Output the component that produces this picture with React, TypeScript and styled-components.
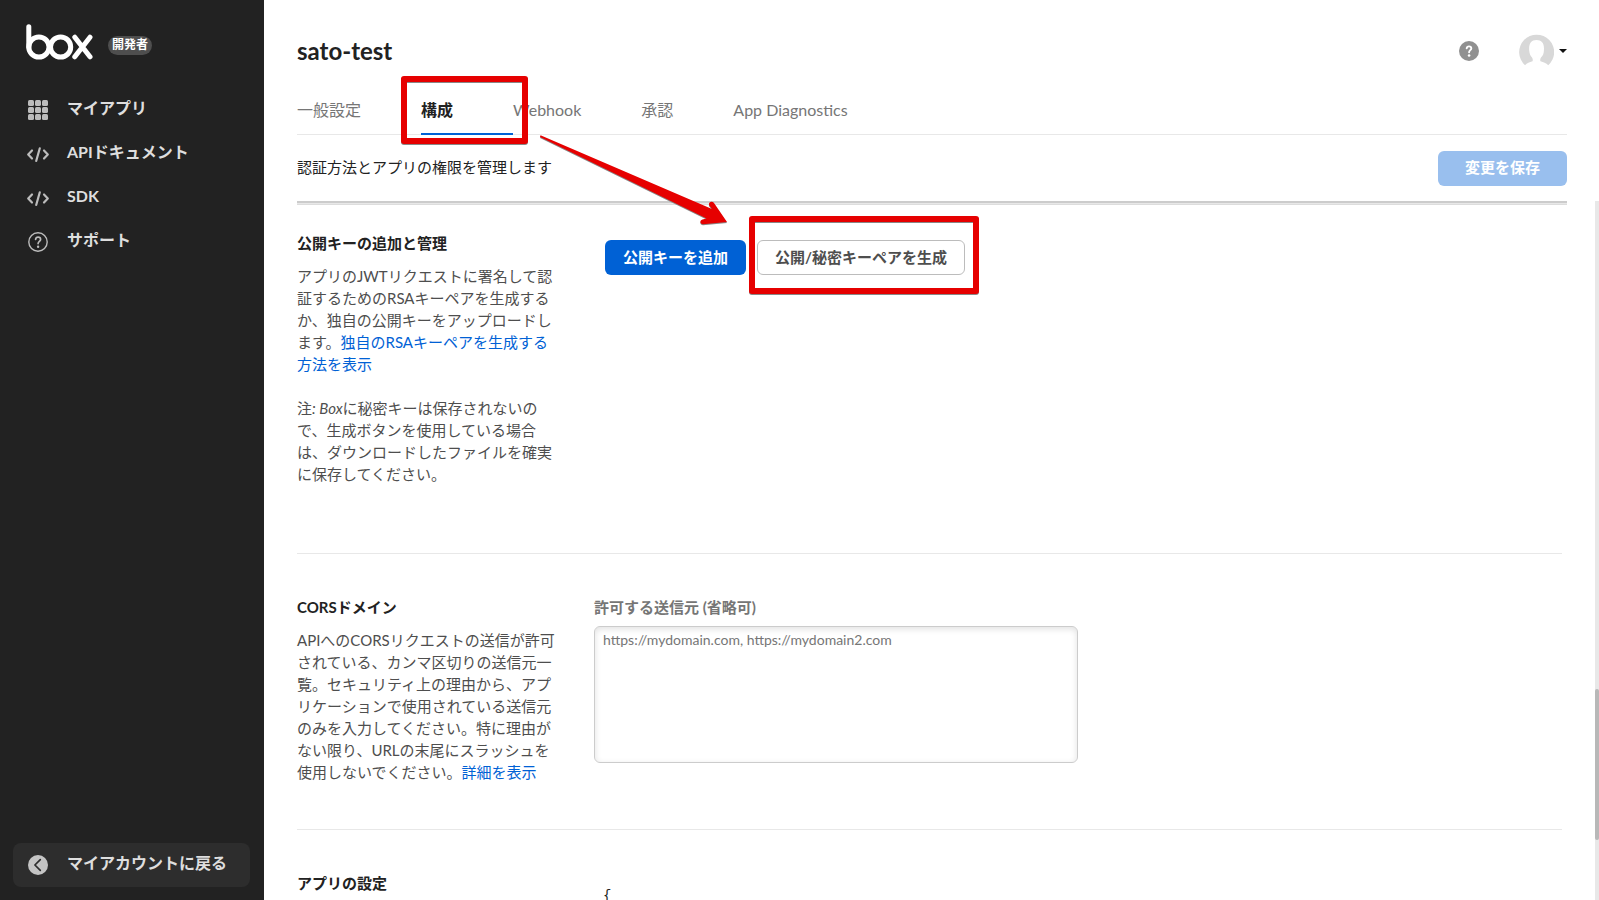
import React from 'react';
import styled, { createGlobalStyle } from 'styled-components';

const GlobalStyle = createGlobalStyle`
  * { box-sizing: border-box; }
  body {
    margin: 0;
    background: #fff;
    color: #222;
    font-family: Lato, "Noto Sans CJK JP", sans-serif;
    font-size: 15px;
    line-height: 22px;
  }
  button, textarea { font-family: inherit; }
`;

const Page = styled.div`
  position: relative;
  display: flex;
  height: 100vh;
  overflow: hidden;
`;

const Sidebar = styled.aside`
  flex: none;
  width: 264px;
  display: flex;
  flex-direction: column;
  padding: 23px 14px 13px 13px;
  background: #222;
`;

const Brand = styled.a`
  display: flex;
  align-items: center;
  gap: 15px;
  height: 38px;
  padding-left: 13px;
  text-decoration: none;
`;

const Badge = styled.span`
  height: 19px;
  margin-top: 7px;
  padding: 0 4px;
  border-radius: 10px;
  background: #4e4e4e;
  color: #fff;
  font-size: 12px;
  font-weight: 700;
  line-height: 17px;
`;

const Menu = styled.nav`
  flex: 1;
  display: flex;
  flex-direction: column;
  margin-top: 26px;
`;

const MenuLink = styled.a<{ $boxed?: boolean }>`
  display: flex;
  align-items: center;
  gap: 17px;
  height: 44px;
  padding: 0 0 ${(p) => (p.$boxed ? 2 : 0)}px 13px;
  border-radius: 8px;
  background: ${(p) => (p.$boxed ? '#2d2d2d' : 'transparent')};
  color: #dedede;
  font-size: 16px;
  font-weight: 700;
  text-decoration: none;

  svg { flex: none; margin-top: 2px; }
  span { padding-bottom: 2px; }
`;

const Main = styled.main`
  flex: 1;
  min-width: 0;
  display: flex;
  flex-direction: column;
`;

const Top = styled.header`
  flex: none;
  margin: 0 32px 0 33px;
`;

const TitleRow = styled.div`
  display: flex;
  align-items: center;
  height: 88px;
  padding-top: 14px;
`;

const Title = styled.h1`
  flex: 1;
  margin: 0;
  font-size: 24px;
  font-weight: 700;
  line-height: 28px;
`;

const IconButton = styled.button`
  display: flex;
  align-items: center;
  gap: 5px;
  margin-left: 40px;
  padding: 0;
  border: 0;
  background: none;
`;

const Tabs = styled.nav`
  display: flex;
  height: 47px;
  border-bottom: 1px solid #e8e8e8;
`;

const Tab = styled.a<{ $active?: boolean }>`
  height: 47px;
  padding: 11px 60px 0 0;
  border-bottom: ${(p) => (p.$active ? '2px solid #0061d5' : '0')};
  color: ${(p) => (p.$active ? '#222' : '#767676')};
  font-size: 16px;
  font-weight: ${(p) => (p.$active ? 700 : 400)};
  text-decoration: none;
`;

const SaveRow = styled.div`
  display: flex;
  align-items: center;
  justify-content: space-between;
  height: 66px;
  p { margin: 0; padding-bottom: 3px; }
`;

const Button = styled.button<{ $tone?: 'primary' | 'faded' }>`
  height: 35px;
  padding: 0 ${(p) => (p.$tone === 'faded' ? 26 : 17)}px 2px;
  border: ${(p) => (p.$tone ? '1px solid transparent' : '1px solid #bcbcbc')};
  border-radius: 6px;
  background: ${(p) => (p.$tone === 'primary' ? '#0061d5' : p.$tone === 'faded' ? '#99bfee' : '#fff')};
  color: ${(p) => (p.$tone ? '#fff' : '#4e4e4e')};
  font-size: 15px;
  font-weight: 700;
  line-height: 22px;
  white-space: nowrap;
`;

const ScrollArea = styled.div`
  flex: 1;
  min-height: 0;
  display: flex;
  overflow: hidden;
`;

const Sections = styled.div`
  flex: 1;
  min-width: 0;
  margin: 0 33px;
`;

const StickyEdge = styled.div`
  height: 4px;
  margin-right: -5px;
  border-top: 2px solid #ccc;
  border-bottom: 1px solid #ddd;
  background: #e8e8e8;
`;

const Section = styled.section<{ $first?: boolean }>`
  display: flex;
  padding: ${(p) => (p.$first ? '27px 0 68px' : '42px 0 46px')};
  border-bottom: 1px solid #e8e8e8;
`;

const About = styled.div`
  flex: none;
  width: 262px;
  h2 {
    margin: 0 0 11px;
    font-size: 15px;
    font-weight: 700;
    line-height: 22px;
  }
  p {
    margin: 0 0 22px;
    color: #4e4e4e;
  }
  p:last-child { margin-bottom: 0; }
  a { color: #0061d5; text-decoration: none; }
`;

const Actions = styled.div`
  display: flex;
  align-items: flex-start;
  gap: 11px;
  padding: 8px 0 0 46px;
`;

const Field = styled.div`
  display: flex;
  flex-direction: column;
  padding-left: 35px;
  label {
    margin-bottom: 8px;
    color: #767676;
    font-weight: 700;
  }
`;

const TextBox = styled.textarea`
  width: 484px;
  height: 137px;
  padding: 3px 8px;
  border: 1px solid #ccc;
  border-radius: 6px;
  box-shadow: inset 0 2px 6px rgba(0, 0, 0, 0.12);
  font-size: 14px;
  line-height: 20px;
  resize: none;
  &::placeholder { color: #767676; opacity: 1; }
`;

const Code = styled.pre`
  margin: 0;
  padding: 14px 0 0 44px;
  font-family: "Liberation Mono", monospace;
  font-size: 14px;
  line-height: 20px;
`;

const Track = styled.div`
  flex: none;
  width: 4px;
  background: #e8e8e8;
`;

const Thumb = styled.div`
  height: 151px;
  margin-top: 488px;
  border-radius: 2px;
  background: #b8b8b8;
`;

const Markup = styled.svg`
  position: absolute;
  top: 0;
  left: 0;
  pointer-events: none;
`;

const BoxLogo = () => (
  <svg width="67" height="36" viewBox="0 0 67 36" fill="none" stroke="#fff" strokeWidth="5" strokeLinecap="round" strokeLinejoin="round" role="img" aria-label="box">
    <path d="M2.8 2.8v20.3" />
    <circle cx="12.9" cy="23" r="10.1" />
    <circle cx="34.6" cy="23" r="10.1" />
    <path d="M48.8 13.2 64 32.8M64 13.2 48.8 32.8" />
  </svg>
);

const GridIcon = () => (
  <svg width="24" height="24" fill="#bcbcbc" aria-hidden="true">
    {[2, 9, 16].map((y) => [2, 9, 16].map((x) => <rect key={`${x}-${y}`} x={x} y={y} width="6" height="6" rx="1.5" />))}
  </svg>
);

const CodeIcon = () => (
  <svg width="24" height="24" fill="none" stroke="#bcbcbc" strokeWidth="2.2" strokeLinecap="round" strokeLinejoin="round" aria-hidden="true">
    <path d="M6 8.500 2.200 12.500l3.800 4M18 8.500l3.800 4-3.800 4" />
    <path d="M13.800 6.300 10.200 19" />
  </svg>
);

const HelpIcon = () => (
  <svg width="24" height="24" fill="none" stroke="#bcbcbc" strokeLinecap="round" aria-hidden="true">
    <circle cx="12" cy="12" r="9.2" strokeWidth="1.4" />
    <path d="M9.6 9.4c.2-1.5 1.2-2.2 2.5-2.2 1.5 0 2.5.9 2.5 2.2 0 1.9-2.5 2.1-2.5 4.2" strokeWidth="1.7" />
    <circle cx="12.1" cy="16.7" r="1.2" fill="#bcbcbc" stroke="none" />
  </svg>
);

const BackIcon = () => (
  <svg width="24" height="24" fill="none" aria-hidden="true">
    <circle cx="12" cy="12" r="10" fill="#c4c4c4" />
    <path d="m14.3 6.6-5.400 5.400 5.400 5.400" stroke="#2d2d2d" strokeWidth="1.7" strokeLinecap="round" strokeLinejoin="round" />
  </svg>
);

const HelpBadge = () => (
  <svg width="20" height="20" fill="none" aria-hidden="true">
    <circle cx="10" cy="10" r="10" fill="#909090" />
    <path d="M7.7 7.3c.2-1.300 1.100-1.900 2.300-1.900 1.400 0 2.300.8 2.300 2 0 1.700-2.200 1.900-2.200 3.900" stroke="#fff" strokeWidth="1.9" strokeLinecap="round" />
    <circle cx="10.1" cy="14.5" r="1.3" fill="#fff" />
  </svg>
);

const Avatar = () => (
  <svg width="35" height="35" viewBox="0 0 35 35" aria-hidden="true">
    <path
      fill="#d8d8d8"
      d="M6 31.200A17.500 17.500 0 1 1 29.300 31.200C27 29 24.500 28.300 21.500 27.200c-.600-1-.300-2.200.500-3.700 2-2 2.800-4 2.900-7C25.500 9.500 23 6 17.500 6S9.700 9.500 10.200 16.500c.300 3 1 5 2.800 7 .800 1.500 1.100 2.700.500 3.700C10.500 28.300 8 29 6 31.200Z"
    />
  </svg>
);

const Caret = () => (
  <svg width="8" height="4" aria-hidden="true">
    <path d="M0 0h8L4 4Z" fill="#111" />
  </svg>
);

const menu = [
  { label: 'マイアプリ', icon: <GridIcon /> },
  { label: 'APIドキュメント', icon: <CodeIcon /> },
  { label: 'SDK', icon: <CodeIcon /> },
  { label: 'サポート', icon: <HelpIcon /> },
];

const tabs = ['一般設定', '構成', 'Webhook', '承認', 'App Diagnostics'];

export default function App() {
  return (
    <Page lang="ja">
      <GlobalStyle />
      <Sidebar>
        <Brand href="#">
          <BoxLogo />
          <Badge>開発者</Badge>
        </Brand>
        <Menu>
          {menu.map((item) => (
            <MenuLink key={item.label} href="#">
              {item.icon}
              <span>{item.label}</span>
            </MenuLink>
          ))}
        </Menu>
        <MenuLink href="#" $boxed>
          <BackIcon />
          <span>マイアカウントに戻る</span>
        </MenuLink>
      </Sidebar>

      <Main>
        <Top>
          <TitleRow>
            <Title>sato-test</Title>
            <IconButton aria-label="ヘルプ"><HelpBadge /></IconButton>
            <IconButton aria-label="アカウント"><Avatar /><Caret /></IconButton>
          </TitleRow>
          <Tabs>
            {tabs.map((t) => (
              <Tab key={t} href="#" $active={t === '構成'}>{t}</Tab>
            ))}
          </Tabs>
          <SaveRow>
            <p>認証方法とアプリの権限を管理します</p>
            <Button $tone="faded">変更を保存</Button>
          </SaveRow>
        </Top>

        <ScrollArea>
          <Sections>
            <StickyEdge />
            <Section $first>
              <About>
                <h2>公開キーの追加と管理</h2>
                <p>
                  アプリのJWTリクエストに署名して認証するためのRSAキーペアを生成するか、独自の公開キーをアップロードします。<a href="#">独自のRSAキーペアを生成する方法を表示</a>
                </p>
                <p>
                  注<i>: Box</i>に秘密キーは保存されないので、生成ボタンを使用している場合は、ダウンロードしたファイルを確実に保存してください。
                </p>
              </About>
              <Actions>
                <Button $tone="primary">公開キーを追加</Button>
                <Button>公開/秘密キーペアを生成</Button>
              </Actions>
            </Section>
            <Section>
              <About>
                <h2>CORSドメイン</h2>
                <p>
                  APIへのCORSリクエストの送信が許可されている、カンマ区切りの送信元一覧。セキュリティ上の理由から、アプリケーションで使用されている送信元のみを入力してください。特に理由がない限り、URLの末尾にスラッシュを使用しないでください。<a href="#">詳細を表示</a>
                </p>
              </About>
              <Field>
                <label htmlFor="origins">許可する送信元 (省略可)</label>
                <TextBox id="origins" placeholder="https://mydomain.com, https://mydomain2.com" />
              </Field>
            </Section>
            <Section>
              <About>
                <h2>アプリの設定</h2>
              </About>
              <Code>{'{'}</Code>
            </Section>
          </Sections>
          <Track><Thumb /></Track>
        </ScrollArea>
      </Main>

      <Markup width="1000" height="310" fill="none" aria-hidden="true">
        <g stroke="#888" strokeWidth="6" strokeLinejoin="round">
          <rect x="404" y="80" width="121" height="62" />
          <rect x="752" y="220" width="224" height="72" />
        </g>
        <g stroke="#e60000" strokeWidth="6" strokeLinejoin="round">
          <rect x="404" y="79" width="121" height="62" />
          <rect x="752" y="219" width="224" height="72" />
        </g>
        <path transform="translate(0 1)" fill="#888" d="M540.500 135.300 712 209l-2.800-3.500c-1.200-3 2.800-5 4.800-2.500l13 19-24 2.200c-3.200 0-3.500-4-.500-4.700l4-.900L540 137Z" />
        <path fill="#e60000" d="M540.500 135.300 712 209l-2.800-3.500c-1.200-3 2.800-5 4.800-2.500l13 19-24 2.200c-3.200 0-3.500-4-.500-4.700l4-.900L540 137Z" />
      </Markup>
    </Page>
  );
}
